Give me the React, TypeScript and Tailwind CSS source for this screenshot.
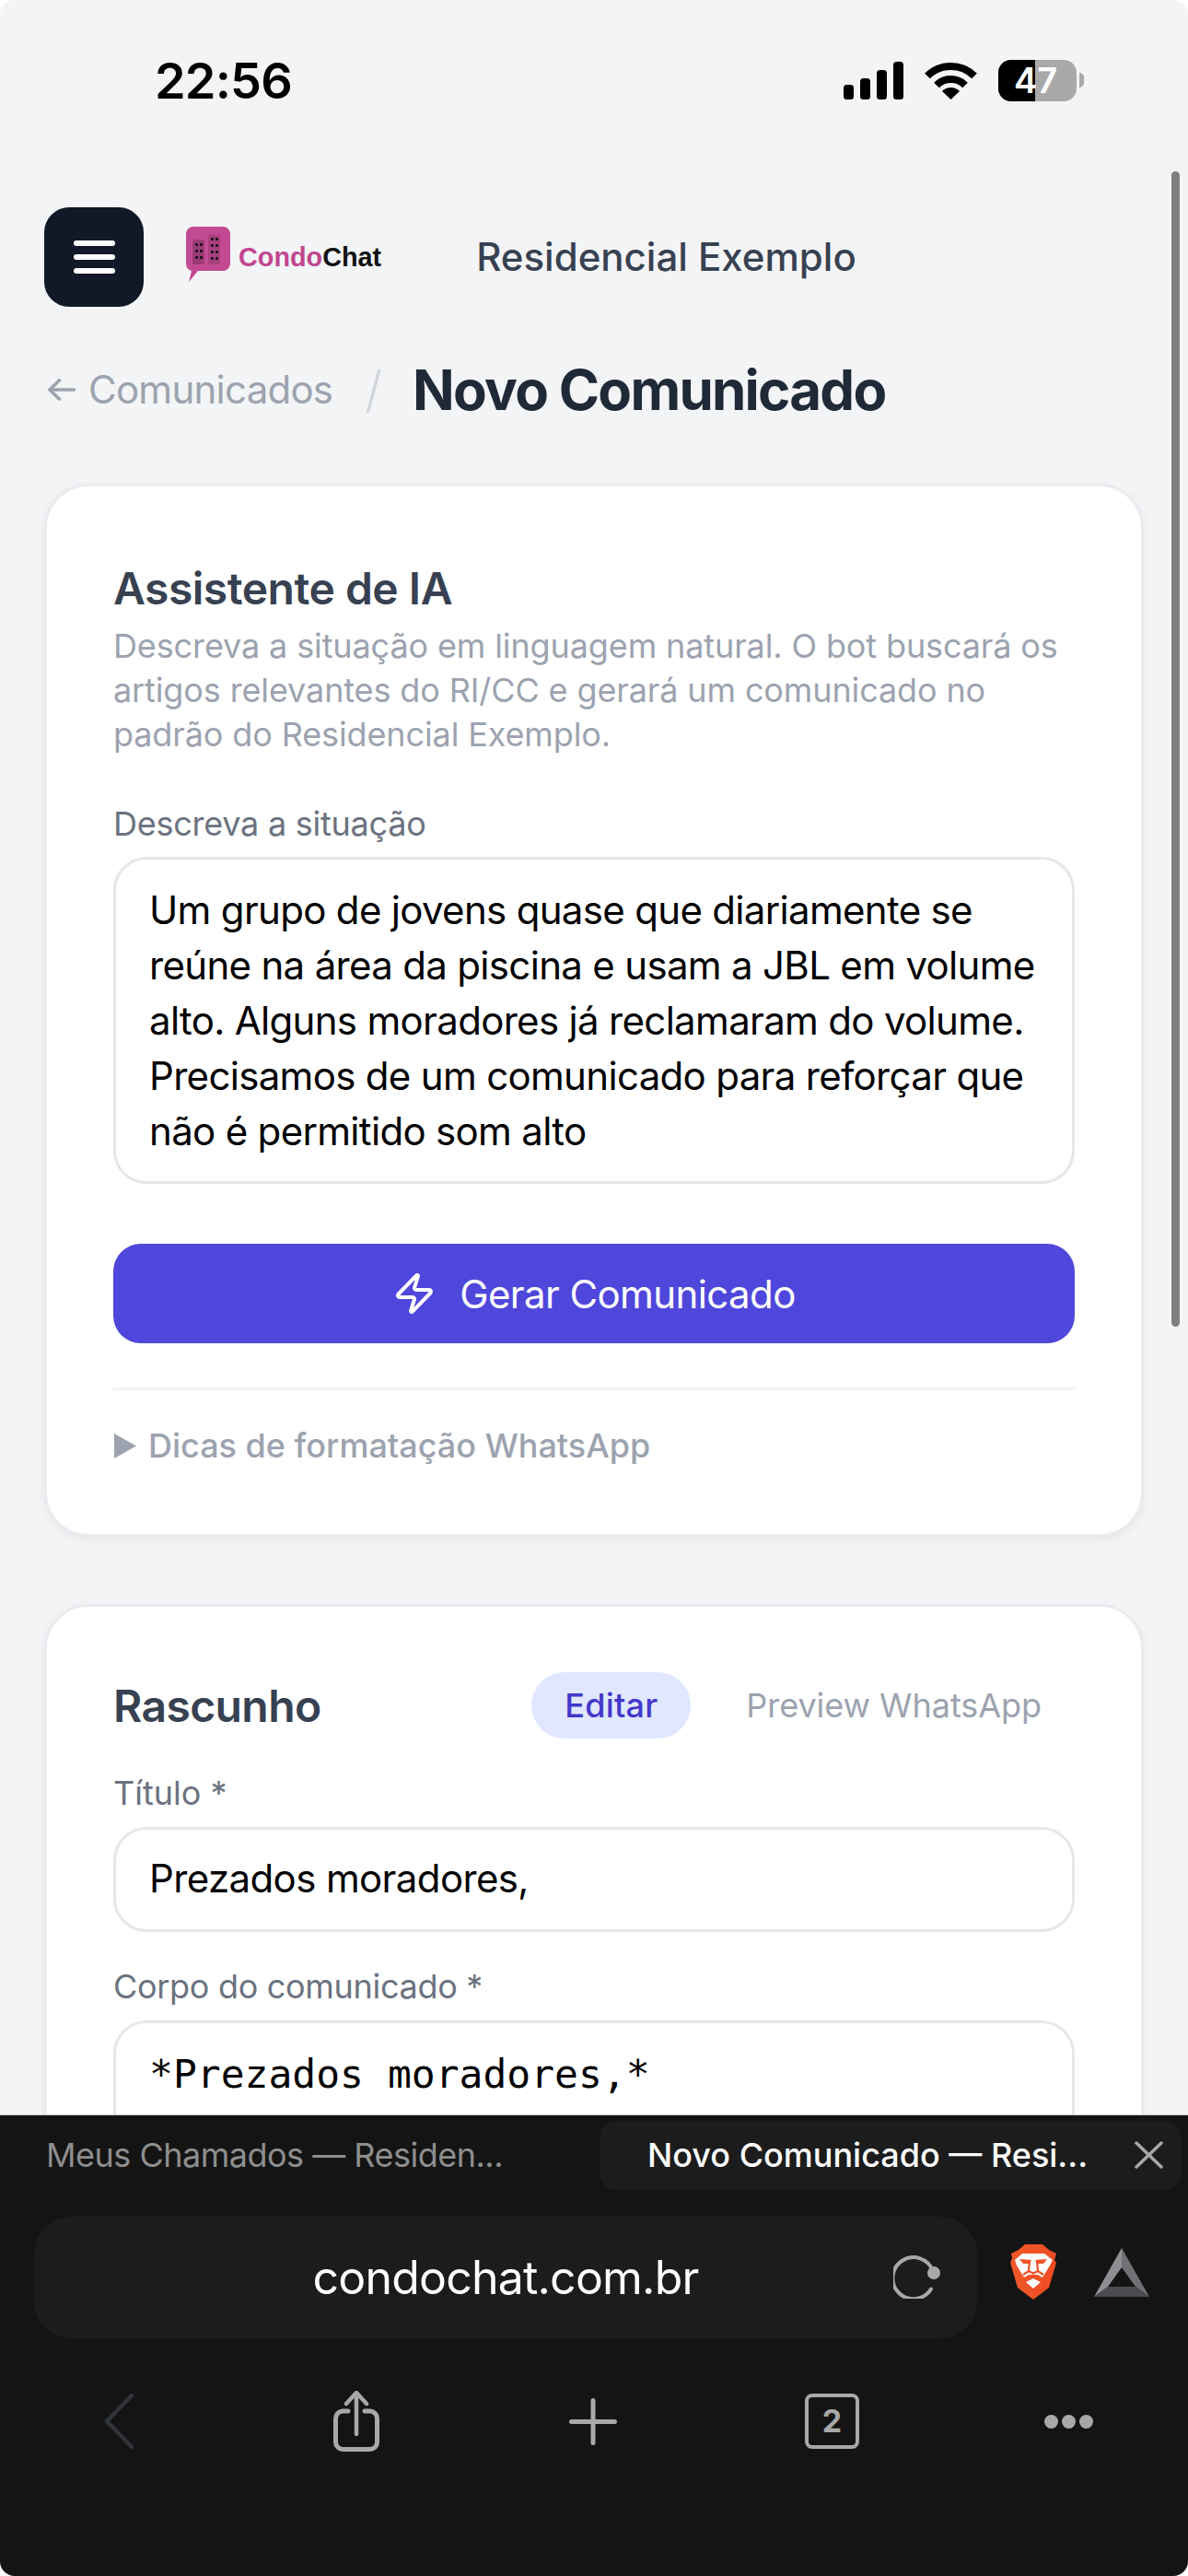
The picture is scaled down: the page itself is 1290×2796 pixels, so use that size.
import React from "react";
import { Zap } from "lucide-react";

const Signal = () => (
  <svg width="65" height="41" viewBox="0 0 65 41" fill="#000">
    <rect x="0" y="25" width="11" height="16" rx="3.5" />
    <rect x="18" y="18" width="11" height="23" rx="3.5" />
    <rect x="36" y="9" width="11" height="32" rx="3.5" />
    <rect x="54" y="0" width="11" height="41" rx="3.5" />
  </svg>
);

const Wifi = () => (
  <svg width="57" height="42" viewBox="0 0 57 42" fill="none">
    <path d="M3 16.5 A36 36 0 0 1 54 16.5" stroke="#000" strokeWidth="8" />
    <path d="M13 26.5 A22 22 0 0 1 44 26.5" stroke="#000" strokeWidth="8" />
    <path d="M28.5 42 L19 33 A13.5 13.5 0 0 1 38 33 Z" fill="#000" />
  </svg>
);

const Battery = () => (
  <div className="flex items-center gap-[3px]">
    <div className="relative flex h-[45px] w-[85px] overflow-hidden rounded-[14px] bg-[#a9a9a9]">
      <div className="h-full w-[40px] bg-black" />
      <span className="absolute left-[17px] top-0 text-[38px] font-semibold leading-[45px] text-white">47</span>
    </div>
    <div className="h-[16px] w-[5px] rounded-r-full bg-[#a9a9a9]" />
  </div>
);

const Logo = () => (
  <svg width="48" height="60" viewBox="0 0 48 60" className="mt-[-6px]">
    <path d="M8 0 H40 A8 8 0 0 1 48 8 V40 A8 8 0 0 1 40 48 H13 L3 60 L6 48 A8 8 0 0 1 0 40 V8 A8 8 0 0 1 8 0 Z" fill="#c24a93" />
    <rect x="7" y="14" width="13" height="27" rx="2" fill="#9c3a76" />
    <rect x="24" y="9" width="13" height="32" rx="2" fill="#a93f80" />
    {[18, 25, 32].flatMap((y) => [10, 15].map((x) => <rect key={`a${x}${y}`} x={x} y={y} width="3" height="3" rx="0.8" fill="#1a0f16" />))}
    {[12, 19, 26, 33].flatMap((y) => [27, 32].map((x) => <rect key={`b${x}${y}`} x={x} y={y} width="3" height="3" rx="0.8" fill="#1a0f16" />))}
  </svg>
);

const Brave = () => (
  <svg width="50" height="60" viewBox="0 0 50 60">
    <defs>
      <linearGradient id="br" x1="0" y1="0" x2="1" y2="0">
        <stop offset="0" stopColor="#f1592a" />
        <stop offset="1" stopColor="#ee4a22" />
      </linearGradient>
    </defs>
    <path d="M16 0 H35 L42 6 L50 10 L48 17 L50 20 L42 47 L25 60 L8 47 L0 20 L2 15 L1 10 L9 6 Z" fill="url(#br)" />
    <path d="M13 10 H37 L46 17 L43 23 L35 36 L30 33 H20 L15 36 L7 23 L5 17 Z" fill="#fff" />
    <path d="M10 16 L23 17 L21 21 L14 21 Z" fill="#f0532a" />
    <path d="M40 16 L27 17 L29 21 L36 21 Z" fill="#f0532a" />
    <path d="M21 18 L20 29 L25 31.5 L30 29 L29 18 M20 29 L14 33 M30 29 L36 33" fill="none" stroke="#f0532a" strokeWidth="2.2" />
    <path d="M17 41 L25 37 L33 41 L25 48 Z" fill="#fff" />
  </svg>
);

const Bat = () => (
  <svg width="60" height="53" viewBox="0 0 60 53">
    <path d="M30 0 L0 53 L15 42 L30 21 Z" fill="#8e8e93" />
    <path d="M30 0 L60 53 L45 42 L30 21 Z" fill="#707075" />
    <path d="M0 53 H60 L45 42 H15 Z" fill="#4b4b50" />
  </svg>
);

const Reload = () => (
  <svg width="52" height="48" viewBox="0 0 52 48" fill="none">
    <path d="M41 37.5 A22.5 22.5 0 1 1 43 18" stroke="#a8a8a8" strokeWidth="4" strokeLinecap="round" />
    <circle cx="44" cy="20" r="7" fill="#a8a8a8" />
  </svg>
);

const Back = () => (
  <svg width="32" height="60" viewBox="0 0 32 60" fill="none">
    <path d="M30 2 L3 30 L30 58" stroke="#30343a" strokeWidth="4.5" strokeLinecap="round" strokeLinejoin="round" />
  </svg>
);

const Share = () => (
  <svg width="50" height="66" viewBox="0 0 50 66" fill="none" stroke="#a8a8a8" strokeLinecap="round" strokeLinejoin="round">
    <path d="M16 22 H10 A8 8 0 0 0 2.5 30 V55 A8 8 0 0 0 10 63.5 H40 A8 8 0 0 0 47.5 55 V30 A8 8 0 0 0 40 22 H34" strokeWidth="5" />
    <path d="M25 47 V3" strokeWidth="4.5" />
    <path d="M14 14 L25 2 L36 14" strokeWidth="4.5" />
  </svg>
);

const Plus = () => (
  <svg width="52" height="51" viewBox="0 0 52 51" fill="none" stroke="#a8a8a8" strokeWidth="5" strokeLinecap="round">
    <path d="M26 2.5 V48.5" />
    <path d="M2.5 25.5 H49.5" />
  </svg>
);

const CloseX = () => (
  <svg width="31" height="30" viewBox="0 0 31 30" fill="none" stroke="#a8a8a8" strokeWidth="3.5" strokeLinecap="round">
    <path d="M2 2 L29 28" />
    <path d="M29 2 L2 28" />
  </svg>
);

const BackArrow = () => (
  <svg width="30" height="24" viewBox="0 0 30 24" fill="none" stroke="#9ca3af" strokeWidth="3.5" strokeLinecap="round" strokeLinejoin="round">
    <path d="M28.5 12 H2" />
    <path d="M12.5 1.8 L2 12 L12.5 22.2" />
  </svg>
);

const fieldClass =
  "block w-full resize-none overflow-hidden rounded-[36px] border-[3px] border-[#e5e7eb] bg-white px-[36px] text-[42px] leading-[60px] text-black outline-none";

export default function App() {
  return (
    <div className="h-[2796px] w-[1290px] bg-white font-['Inter',sans-serif]">
      <div className="relative flex h-full w-full flex-col overflow-hidden rounded-[16px] bg-[#f3f4f6]">
        <div className="min-h-0 flex-1 overflow-hidden">
          <div className="flex h-[174px] items-center justify-between pl-[168px] pr-[113px]">
            <span className="mt-[2px] text-[54px] font-semibold leading-none tracking-[-0.8px] text-black">22:56</span>
            <div className="flex items-center gap-[23px]">
              <Signal />
              <Wifi />
              <Battery />
            </div>
          </div>

          <div className="mx-[48px] mt-[51px] flex h-[108px] items-center">
            <button className="flex h-[108px] w-[108px] flex-col items-center justify-center gap-[9px] rounded-[27px] bg-[#111827]">
              <span className="h-[6px] w-[45px] rounded-full bg-white" />
              <span className="h-[6px] w-[45px] rounded-full bg-white" />
              <span className="h-[6px] w-[45px] rounded-full bg-white" />
            </button>
            <div className="ml-[46px] flex items-center gap-[9px]">
              <Logo />
              <span className="font-['Liberation_Sans',sans-serif] text-[28.8px] font-bold leading-none">
                <span className="text-[#c0468f]">Condo</span>
                <span className="text-[#111111]">Chat</span>
              </span>
            </div>
            <span className="ml-[103px] text-[42px] font-medium leading-[60px] text-[#374151]">Residencial Exemplo</span>
          </div>

          <div className="mx-[48px] mt-[45px] flex h-[90px] items-center pl-[4px]">
            <BackArrow />
            <span className="ml-[14px] text-[42px] leading-[60px] tracking-[-0.75px] text-[#9ca3af]">Comunicados</span>
            <span className="ml-[35px] text-[54px] font-light leading-[60px] text-[#d1d5db]">/</span>
            <h1 className="ml-[33px] text-[60px] font-bold leading-[84px] tracking-[-1.75px] text-[#1f2937]">Novo Comunicado</h1>
          </div>

          <section className="mx-[48px] mt-[57px] rounded-[48px] border-[3px] border-[#e9ebef] bg-white px-[72px] pb-[72px] pt-[75px] shadow-[0_3px_9px_rgba(0,0,0,0.06)]">
            <h2 className="text-[48px] font-semibold leading-[72px] tracking-[-0.5px] text-[#374151]">Assistente de IA</h2>
            <p className="mt-[2px] text-[36px] leading-[48px] tracking-[-0.12px] text-[#9ca3af]">
              Descreva a situação em linguagem natural. O bot buscará os artigos relevantes do RI/CC e gerará um comunicado no padrão do Residencial Exemplo.
            </p>
            <label className="mt-[49px] block text-[36px] leading-[48px] tracking-[-0.25px] text-[#6b7280]">Descreva a situação</label>
            <textarea
              readOnly
              className={`${fieldClass} mt-[12px] h-[355px] py-[25px] tracking-[-0.68px]`}
              value="Um grupo de jovens quase que diariamente se reúne na área da piscina e usam a JBL em volume alto. Alguns moradores já reclamaram do volume. Precisamos de um comunicado para reforçar que não é permitido som alto"
            />
            <button className="mt-[65px] flex h-[108px] w-full items-center justify-center gap-[25px] rounded-[30px] bg-[#4f47dc] text-[42px] font-normal tracking-[-0.6px] text-white">
              <Zap className="h-[48px] w-[48px]" strokeWidth={2} />
              Gerar Comunicado
            </button>
            <div className="mt-[48px] border-t-[3px] border-[#f3f4f6] pt-[36px]">
              <div className="flex items-center gap-[12px] text-[36px] font-medium leading-[48px] text-[#9ca3af]">
                <svg width="26" height="27" viewBox="0 0 26 27" fill="#9ca3af">
                  <path d="M1 0 L25 13.5 L1 27 Z" />
                </svg>
                Dicas de formatação WhatsApp
              </div>
            </div>
          </section>

          <section className="mx-[48px] mt-[73px] h-[900px] rounded-[48px] border-[3px] border-[#e9ebef] bg-white px-[72px] pt-[71px] shadow-[0_3px_9px_rgba(0,0,0,0.06)]">
            <div className="flex h-[72px] items-center justify-between">
              <h2 className="mt-[2px] text-[48px] font-semibold leading-[72px] tracking-[-0.6px] text-[#374151]">Rascunho</h2>
              <div className="flex items-center gap-[24px]">
                <span className="rounded-full bg-[#e0e7ff] px-[36px] text-[36px] font-medium leading-[72px] tracking-[0.2px] text-[#4338ca]">Editar</span>
                <span className="px-[36px] text-[36px] leading-[72px] tracking-[-0.05px] text-[#9ca3af]">Preview WhatsApp</span>
              </div>
            </div>
            <label className="mt-[35px] block text-[36px] leading-[48px] text-[#6b7280]">Título *</label>
            <input readOnly className={`${fieldClass} mt-[13px] h-[114px] pb-[3px] tracking-[-0.62px]`} value="Prezados moradores," />
            <label className="mt-[35px] block text-[36px] leading-[48px] tracking-[-0.3px] text-[#6b7280]">Corpo do comunicado *</label>
            <textarea
              readOnly
              className={`${fieldClass} mt-[13px] h-[500px] pb-[24px] pt-[25px] font-['DejaVu_Sans_Mono',monospace] text-[43px]`}
              value="*Prezados moradores,*"
            />
          </section>
        </div>

        <div className="h-[501px] shrink-0 border-t border-[#c9cbd0] bg-[#141414]">
          <div className="flex h-[81px] items-end">
            <div className="flex h-[75px] w-[651px] items-center pb-[2px] pl-[50px] text-[36px] leading-none tracking-[-0.5px] text-[#8e8e8e]">
              Meus Chamados — Residen...
            </div>
            <div className="mr-[7px] flex h-[75px] flex-1 items-center justify-between rounded-[18px] bg-[#1c1c1c] pb-[2px] pl-[52px] pr-[20px] text-[36px] font-medium leading-none text-white">
              Novo Comunicado — Resi...
              <CloseX />
            </div>
          </div>
          <div className="ml-[37px] mt-[29px] flex items-center">
            <div className="relative flex h-[132px] w-[1024px] items-center justify-center rounded-[40px] bg-[#1c1c1c] text-[50px] leading-none tracking-[-0.8px] text-white">
              condochat.com.br
              <div className="absolute left-[933px] top-[41px]">
                <Reload />
              </div>
            </div>
            <div className="ml-[36px] mt-[-12px]">
              <Brave />
            </div>
            <div className="ml-[41px] mt-[-12px]">
              <Bat />
            </div>
          </div>
          <div className="mt-[57px] flex h-[66px] items-center pl-[113px]">
            <Back />
            <div className="ml-[217px]">
              <Share />
            </div>
            <div className="ml-[206px]">
              <Plus />
            </div>
            <div className="ml-[204px] flex h-[60px] w-[59px] items-center justify-center rounded-[8px] border-[4.5px] border-[#a8a8a8] text-[34px] font-bold leading-none text-[#a8a8a8]">
              2
            </div>
            <div className="ml-[201px] flex items-center gap-[4px]">
              <span className="h-[15px] w-[15px] rounded-full bg-[#a8a8a8]" />
              <span className="h-[15px] w-[15px] rounded-full bg-[#a8a8a8]" />
              <span className="h-[15px] w-[15px] rounded-full bg-[#a8a8a8]" />
            </div>
          </div>
        </div>

        <div className="absolute left-[1272px] top-[186px] h-[1254px] w-[9px] rounded-full bg-[#7f7f7f]" />
      </div>
    </div>
  );
}
